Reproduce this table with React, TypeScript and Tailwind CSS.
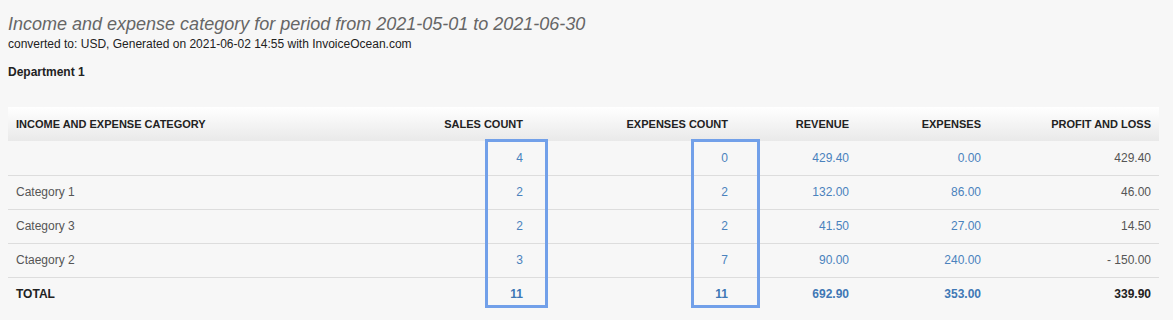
import React from "react";

const rows = [
  { name: "", sales: "4", expc: "0", rev: "429.40", exp: "0.00", pl: "429.40" },
  { name: "Category 1", sales: "2", expc: "2", rev: "132.00", exp: "86.00", pl: "46.00" },
  { name: "Category 3", sales: "2", expc: "2", rev: "41.50", exp: "27.00", pl: "14.50" },
  { name: "Ctaegory 2", sales: "3", expc: "7", rev: "90.00", exp: "240.00", pl: "- 150.00" },
];

export default function App() {
  return (
    <div className="w-[1173px] h-[320px] bg-[#f7f7f7] overflow-hidden text-[#333] font-['Liberation_Sans',Arial,sans-serif]">
      <div className="pl-2 pt-[13px]">
        <h1 className="text-[18px] leading-[22px] italic text-[#666]">
          Income and expense category for period from 2021-05-01 to 2021-06-30
        </h1>
        <p className="text-[12px] leading-[15px] mt-[2px] text-[#222]">
          converted to: USD, Generated on 2021-06-02 14:55 with InvoiceOcean.com
        </p>
        <p className="text-[12px] leading-[15px] font-bold mt-[13px] text-[#222]">Department 1</p>
      </div>
      <div className="relative ml-2 mt-[27px] w-[1151px]">
        <table className="w-full border-collapse text-[12px]">
          <colgroup>
            <col className="w-[371px]" />
            <col className="w-[152px]" />
            <col className="w-[205px]" />
            <col className="w-[121px]" />
            <col className="w-[132px]" />
            <col className="w-[170px]" />
          </colgroup>
          <thead>
            <tr className="h-[34px] bg-gradient-to-b from-white to-[#e9e9e9] text-[11px] font-bold text-[#222] uppercase">
              <th className="text-left px-2 font-bold">Income and expense category</th>
              <th className="text-right px-2 font-bold">Sales count</th>
              <th className="text-right px-2 font-bold">Expenses count</th>
              <th className="text-right px-2 font-bold">Revenue</th>
              <th className="text-right px-2 font-bold">Expenses</th>
              <th className="text-right px-2 font-bold">Profit and loss</th>
            </tr>
          </thead>
          <tbody>
            {rows.map((r, i) => (
              <tr key={i} className="h-[34px] border-b border-[#dddddd]">
                <td className="px-2 text-[#555]">{r.name}</td>
                <td className="px-2 text-right text-[#4a82bd]">{r.sales}</td>
                <td className="px-2 text-right text-[#4a82bd]">{r.expc}</td>
                <td className="px-2 text-right text-[#4a82bd]">{r.rev}</td>
                <td className="px-2 text-right text-[#4a82bd]">{r.exp}</td>
                <td className="px-2 text-right text-[#555]">{r.pl}</td>
              </tr>
            ))}
            <tr className="h-[34px] font-bold">
              <td className="px-2 text-[#222]">TOTAL</td>
              <td className="px-2 text-right text-[#3f78b5]">11</td>
              <td className="px-2 text-right text-[#3f78b5]">11</td>
              <td className="px-2 text-right text-[#3f78b5]">692.90</td>
              <td className="px-2 text-right text-[#3f78b5]">353.00</td>
              <td className="px-2 text-right text-[#222]">339.90</td>
            </tr>
          </tbody>
        </table>
        <div className="absolute left-[477px] top-[32px] w-[63px] h-[169px] border-[3px] border-[#72a0e9]" />
        <div className="absolute left-[683px] top-[32px] w-[69px] h-[169px] border-[3px] border-[#72a0e9]" />
      </div>
    </div>
  );
}
